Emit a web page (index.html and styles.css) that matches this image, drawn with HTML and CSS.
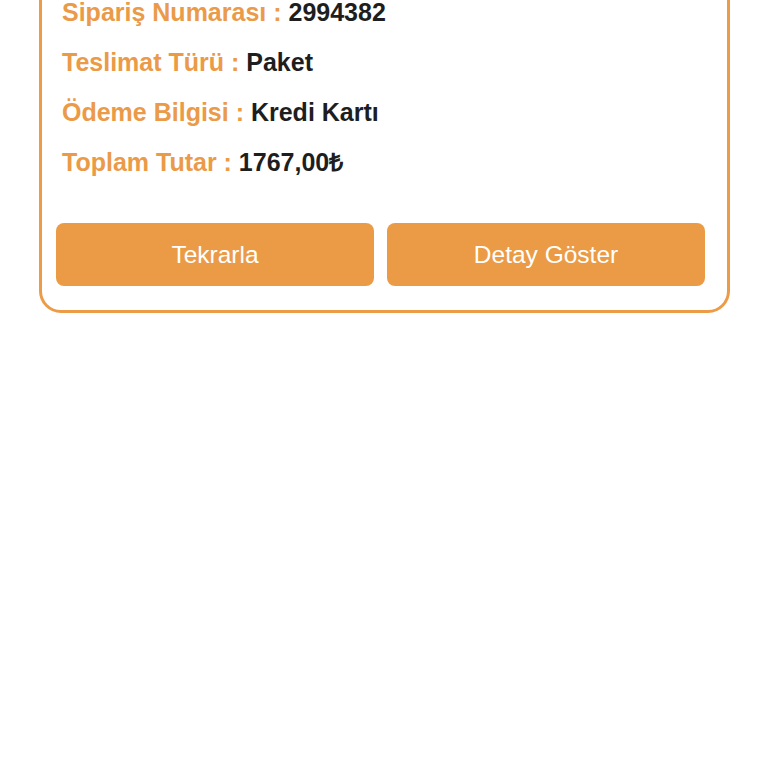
FILE: index.html
```html
<!DOCTYPE html>
<html lang="tr">

<head>
    <meta charset="UTF-8">
    <meta name="viewport" content="width=device-width, initial-scale=1.0">
    <title>Sipariş Detayı</title>
    <link rel="stylesheet" href="styles.css">
</head>

<body>
    <section class="order-card">
        <div class="info">
            <p class="row">Sipariş Numarası : <span>2994382</span></p>
            <p class="row">Teslimat Türü : <span>Paket</span></p>
            <p class="row">Ödeme Bilgisi : <span>Kredi Kartı</span></p>
            <p class="row">Toplam Tutar : <span>1767,00₺</span></p>
        </div>
        <div class="actions">
            <button class="btn">Tekrarla</button>
            <button class="btn">Detay Göster</button>
        </div>
    </section>
</body>

</html>
```

FILE: styles.css
```css
body {
    margin: 0;
    background: #fff;
    font-family: "Liberation Sans", Arial, Helvetica, sans-serif;
}

.order-card {
    margin: -60px 38px 0 39px;
    border: 3px solid #ec9b47;
    border-radius: 22px;
    padding: 44px 22px 24px 14px;
}

.info {
    padding-left: 6px;
    margin-bottom: 36px;
}

.row {
    margin: 0;
    height: 50px;
    line-height: 50px;
    font-size: 25px;
    font-weight: bold;
    color: #eb9a48;
    white-space: nowrap;

    span {
        color: #1e1e1e;
    }
}

.actions {
    display: flex;
    gap: 13px;

    .btn {
        flex: 1;
        height: 63px;
        border: none;
        border-radius: 8px;
        background-color: #eb9b45;
        color: #fff;
        font-family: "Liberation Sans", Arial, Helvetica, sans-serif;
        font-size: 24.5px;
    }
}
```
